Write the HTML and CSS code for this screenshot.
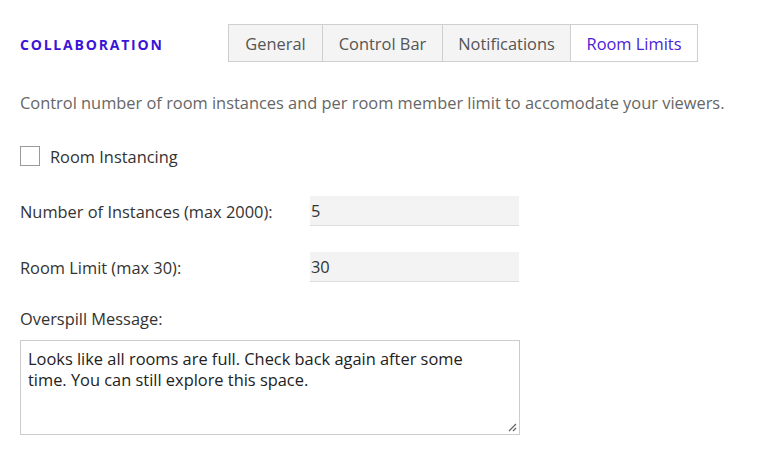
FILE: index.html
```html
<!DOCTYPE html>
<html>
<head>
<meta charset="utf-8">
<link rel="stylesheet" href="styles.css">
</head>
<body>
<div class="page">
  <div class="header">
    <div class="title">COLLABORATION</div>
    <div class="tabs">
      <div class="tab">General</div>
      <div class="tab">Control Bar</div>
      <div class="tab">Notifications</div>
      <div class="tab active">Room Limits</div>
    </div>
  </div>
  <p class="desc">Control number of room instances and per room member limit to accomodate your viewers.</p>
  <label class="check-row"><span class="checkbox"></span><span>Room Instancing</span></label>
  <div class="field-row">
    <div class="field-label">Number of Instances (max 2000):</div>
    <div class="input">5</div>
  </div>
  <div class="field-row">
    <div class="field-label">Room Limit (max 30):</div>
    <div class="input">30</div>
  </div>
  <div class="msg-label">Overspill Message:</div>
  <div class="textarea">Looks like all rooms are full. Check back again after some time. You can still explore this space.
    <svg class="grip" width="10" height="10" viewBox="0 0 10 10"><path d="M9 2 L2 9 M9 6 L6 9" stroke="#666" stroke-width="1.3" fill="none"/></svg>
  </div>
</div>
</body>
</html>
```
FILE: styles.css
```css
html, body { margin: 0; padding: 0; background: #fff; }
body { font-family: "Open Sans", "Liberation Sans", sans-serif; color: #333; }
.page { padding: 24px 0 0 20px; width: 752px; }
.header { display: flex; align-items: center; height: 38px; }
.title { width: 208px; font-size: 14px; font-weight: 700; letter-spacing: 1.8px; color: #3a14d6; padding-top: 3px; }
.tabs { display: flex; border: 1px solid #cfcfcf; height: 36px; }
.tab { display: flex; align-items: center; justify-content: center; background: #f4f4f4; color: #555; font-size: 16.4px; border-left: 1px solid #cfcfcf; }
.tab:first-child { border-left: none; width: 93px; }
.tab:nth-child(2) { width: 119px; }
.tab:nth-child(3) { width: 127px; }
.tab.active { width: 126px; background: #fff; color: #4b22d9; }
.desc { margin: 31px 0 0; font-size: 16.4px; color: #666; line-height: 20px; }
.check-row { display: flex; align-items: center; gap: 10px; margin-top: 33px; font-size: 16.4px; color: #333; height: 20px; }
.checkbox { width: 18px; height: 18px; border: 1px solid #999; background: #fff; }
.field-row { display: flex; align-items: center; margin-top: 30px; }
.field-row + .field-row { margin-top: 26px; }
.field-label { width: 290px; font-size: 16.4px; color: #333; }
.input { width: 209px; height: 30px; box-sizing: border-box; background: #f3f3f3; border-bottom: 1px solid #ddd; font-size: 16.4px; color: #333; padding-left: 1px; display: flex; align-items: center; }
.msg-label { margin-top: 27px; font-size: 16.4px; color: #333; line-height: 20px; }
.textarea { position: relative; margin-top: 11px; width: 500px; height: 95px; box-sizing: border-box; border: 1px solid #ccc; padding: 7px 24px 7px 7px; font-size: 16.4px; line-height: 21px; color: #222; }
.grip { position: absolute; right: 2px; bottom: 2px; }
```
